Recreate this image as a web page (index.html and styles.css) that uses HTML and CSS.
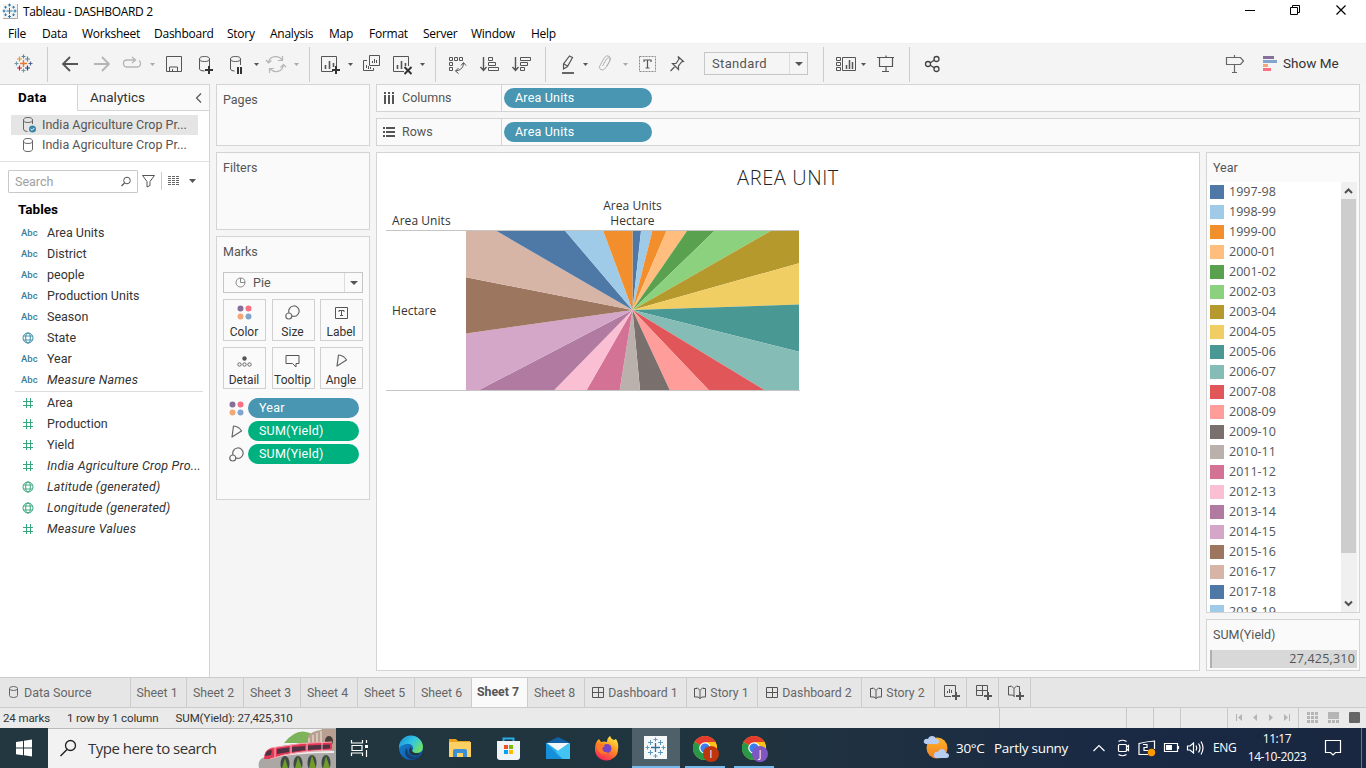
FILE: index.html
```html
<!DOCTYPE html>
<html lang="en">
<head>
<meta charset="utf-8">
<title>Tableau - DASHBOARD 2</title>
<link rel="stylesheet" href="styles.css">
</head>
<body>
<svg class="defs" width="0" height="0" aria-hidden="true">
  <defs>
    <symbol id="globe" viewBox="0 0 12 12"><g fill="none" stroke="currentColor"><circle cx="6" cy="6" r="5"/><ellipse cx="6" cy="6" rx="2.3" ry="5"/><path d="M1.5 4h9M1.5 8h9" stroke-width=".9"/></g></symbol>
    <symbol id="hash" viewBox="0 0 12 12"><path d="M4.500 1v10M8.500 1v10M1 4.500h10M1 8.500h10" fill="none" stroke="currentColor"/></symbol>
    <symbol id="dots" viewBox="0 0 15 15"><circle cx="3.500" cy="3.500" r="3" fill="#86709b"/><circle cx="11.500" cy="3.500" r="3" fill="#fa7080"/><circle cx="3.500" cy="11.500" r="3" fill="#f3a878"/><circle cx="11.500" cy="11.500" r="3" fill="#82a5cf"/></symbol>
    <symbol id="size" viewBox="0 0 15 15"><g fill="none" stroke="#666" stroke-width="1.200"><path d="M4 7.800A5.200 5.200 0 1 1 7 11"/><circle cx="3.800" cy="11" r="3"/></g></symbol>
    <symbol id="angle" viewBox="0 0 15 15"><path d="M4.500 2Q10 2.500 12.500 7L3 13z" fill="none" stroke="#666" stroke-width="1.200" stroke-linejoin="round"/></symbol>
    <symbol id="grid" viewBox="0 0 12 12"><path d="M.5.5h11v10h-11zM6.500 .5v10M.5 5.500h11" fill="none" stroke="#555"/></symbol>
    <symbol id="book" viewBox="0 0 12 12"><path d="M3 1.500H.5v8.500H4l2 1.500L8 10h3.500V1.500H9M3 .5l3 3 3-3M6 3.500v8" fill="none" stroke="#555"/></symbol>
    <symbol id="chrome" viewBox="0 0 24 24"><circle cx="12" cy="12" r="12" fill="#fbc116"/><path d="M12 12L1.600 6A12 12 0 0 1 22.400 6z" fill="#e33b2e"/><path d="M12 12L1.600 6A12 12 0 0 0 12 24l5-9z" fill="#279847"/><path d="M12 12l10.400-6A12 12 0 0 1 12 24l5-9z" fill="#fbc116"/><path d="M12 6h10.400L17 12z" fill="#fbc116"/><circle cx="12" cy="12" r="5.800" fill="#fff"/><circle cx="12" cy="12" r="4.600" fill="#3b7ded"/></symbol>
    <linearGradient id="edgeA" x1="0" y1="0" x2="1" y2=".6"><stop offset="0" stop-color="#168bd0"/><stop offset=".55" stop-color="#32c5e6"/><stop offset="1" stop-color="#6ce06a"/></linearGradient>
    <linearGradient id="edgeB" x1="0" y1="0" x2="1" y2="1"><stop offset="0" stop-color="#1687d8"/><stop offset="1" stop-color="#0c4e9b"/></linearGradient>
    <linearGradient id="fox" x1=".8" y1="0" x2=".3" y2="1"><stop offset="0" stop-color="#fff04a"/><stop offset=".45" stop-color="#ff9420"/><stop offset="1" stop-color="#f8235b"/></linearGradient>
    <linearGradient id="sun" x1="0" y1="0" x2="0" y2="1"><stop offset="0" stop-color="#fbb42b"/><stop offset="1" stop-color="#f47f22"/></linearGradient>
  </defs>
</svg>

<header class="titlebar">
  <svg width="23" height="24" viewBox="0 0 23 24"><path d="M3 4h14v14H3z" fill="#f2f2f2"/><path d="M3 18.500h14.500V4" fill="none" stroke="#aaa"/><path d="M9.500 8v6M6.500 11h6M9.500 3.500v3M8 5h3M9.500 15v3M8 16.500h3M4 9.500v3M2.500 11h3M15 9.500v3M13.500 11h3M5.500 6v2.500M4.300 7.200h2.500M13.500 6v2.500M12.300 7.200h2.500M5.500 13.500v2.500M4.300 14.800h2.500M13.500 13.500v2.500M12.300 14.800h2.500" stroke="#2b7bab" fill="none"/></svg>
  <span class="app-title">Tableau - DASHBOARD 2</span>
  <svg class="push" width="140" height="24" viewBox="1226 0 140 24"><g fill="none" stroke="#000"><path d="M1245 10.500h10M1290.500 7.500h7v7h-7zM1292.500 7v-1.500h7v7h-1.500"/><path d="M1336.500 5.500l9 9M1345.500 5.500l-9 9" stroke-width="1.200"/></g></svg>
</header>

<nav class="menubar"><span>File</span><span>Data</span><span>Worksheet</span><span>Dashboard</span><span>Story</span><span>Analysis</span><span>Map</span><span>Format</span><span>Server</span><span>Window</span><span>Help</span></nav>

<div class="toolbar">
  <svg width="48" height="41" viewBox="0 43 48 41"><g fill="none" stroke-width="1.200"><path d="M23.500 60v7M20 63.500h7" stroke="#e8762c" stroke-width="1.500"/><path d="M19.500 56.500v5M17 59h5" stroke="#eb912c"/><path d="M27.500 56.500v5M25 59h5" stroke="#59879b"/><path d="M19.500 65.500v5M17 68h5" stroke="#c72035"/><path d="M27.500 65.500v5M25 68h5" stroke="#1f447e"/><path d="M23.500 54.500v4M21.500 56.500h4" stroke="#5b879b"/><path d="M23.500 68.500v4M21.500 70.500h4" stroke="#7199a6"/><path d="M16.500 61.500v4M14.500 63.500h4" stroke="#7199a6"/><path d="M30.500 61.500v4M28.500 63.500h4" stroke="#5b6591"/></g><path d="M47.500 47v35" stroke="#ccc"/></svg>
  <svg width="38" height="41" viewBox="48 43 38 41"><path d="M78 64H63M70 57l-7 7 7 7" fill="none" stroke="#555" stroke-width="1.800"/></svg>
  <svg width="32" height="41" viewBox="86 43 32 41"><path d="M94 64h15M102 57l7 7-7 7" fill="none" stroke="#b5b5b5" stroke-width="1.800"/></svg>
  <svg width="42" height="41" viewBox="118 43 42 41"><path d="M135 60h-8q-3.500 0-3.500 3.500t3.500 3.500h10q3.500 0 3.500-3.500 0-2-1.500-3M132 57l3.500 3-3.500 3" fill="none" stroke="#b5b5b5" stroke-width="1.300"/><path d="M150 63h5l-2.500 3z" fill="#aaa"/></svg>
  <svg width="30" height="41" viewBox="160 43 30 41"><path d="M166.500 56.500h15v15h-15zM169.500 71v-4h8v4M172.500 71v-2" fill="none" stroke="#555"/></svg>
  <svg width="32" height="41" viewBox="190 43 32 41"><path d="M199.500 59v10q0 2 5 2M199.500 59a5 2.500 0 0 1 10 0 5 2.500 0 0 1-10 0M209.500 59v7" fill="none" stroke="#555"/><path d="M209 66v8M205 70h8" stroke="#333" stroke-width="2"/></svg>
  <svg width="41" height="41" viewBox="222 43 41 41"><path d="M230.500 59v10q0 2 4 2M230.500 59a5 2.500 0 0 1 10 0 5 2.500 0 0 1-10 0M240.500 59v6" fill="none" stroke="#555"/><path d="M238 67v7M241 67v7" stroke="#333" stroke-width="2"/><path d="M254 63h5l-2.500 3z" fill="#555"/></svg>
  <svg width="49" height="41" viewBox="263 43 49 41"><path d="M268.500 62a7.500 7.500 0 0 1 13.500-2M283.500 65a7.500 7.500 0 0 1-13.500 3.500M282.500 56v4.500h-4.500M269.500 73v-4.500h4.500M266 60l2.500 3 3-2.500M280.500 67.500l3-3 2.500 2.500" fill="none" stroke="#b5b5b5" stroke-width="1.200"/><path d="M294 63h5l-2.500 3z" fill="#aaa"/><path d="M309.500 47v35" stroke="#ccc"/></svg>
  <svg width="46" height="41" viewBox="312 43 46 41"><path d="M333 71.500h-11.500v-15h15V66" fill="none" stroke="#555"/><path d="M325.500 65v4M329.500 61v8M333.500 63v4" stroke="#555" stroke-width="1.600"/><path d="M336 66v8M332 70h8" stroke="#333" stroke-width="2"/><path d="M348 63h5l-2.500 3z" fill="#555"/></svg>
  <svg width="30" height="41" viewBox="358 43 30 41"><path d="M369.500 55.500h10v10h-10zM367 60.500h-3.500v10h10V68M372.500 63v-2M374.500 63v-4M376.500 63v-3M366.500 68v-3M368.500 69v-3M370.500 69v-2" fill="none" stroke="#555"/></svg>
  <svg width="52" height="41" viewBox="388 43 52 41"><path d="M404 71.500h-10.500v-15h15V66" fill="none" stroke="#555"/><path d="M397.500 65v4M401.500 61v8M405.500 63v3" stroke="#555" stroke-width="1.600"/><path d="M404.500 67l7 7M411.500 67l-7 7" stroke="#333" stroke-width="2"/><path d="M420 63h5l-2.500 3z" fill="#555"/><path d="M435.500 47v35" stroke="#ccc"/></svg>
  <svg width="34" height="41" viewBox="440 43 34 41"><path d="M449.500 57.500h3v3h-3zM454.500 57.500h3v3h-3zM459.500 57.500h3v3h-3zM449.500 62.500h3v3h-3zM449.500 67.500h3v3h-3zM463.500 63q0 7-8 8M461 65.500l2.500-3 2.500 3M458.500 68l-3 3 3 2.500" fill="none" stroke="#555"/></svg>
  <svg width="34" height="41" viewBox="474 43 34 41"><path d="M483.500 57v13M480.500 67l3 3.500 3-3.500" stroke="#555" stroke-width="1.400" fill="none"/><path d="M488.500 57.500h4v3h-4zM488.500 62.500h7v3h-7zM488.500 67.500h10v3h-10z" fill="none" stroke="#555"/></svg>
  <svg width="44" height="41" viewBox="508 43 44 41"><path d="M515.500 57v13M512.500 67l3 3.500 3-3.500" stroke="#555" stroke-width="1.400" fill="none"/><path d="M520.500 57.500h10v3h-10zM520.500 62.500h7v3h-7zM520.500 67.500h4v3h-4z" fill="none" stroke="#555"/><path d="M545.500 47v35" stroke="#ccc"/></svg>
  <svg width="42" height="41" viewBox="552 43 42 41"><path d="M569.500 56l3 1.500-5 9-4 2.500v-5zM564 64l3.500 2" fill="none" stroke="#555" stroke-width="1.200"/><path d="M562 73h12" stroke="#666" stroke-width="2"/><path d="M583 63h5l-2.500 3z" fill="#555"/></svg>
  <svg width="40" height="41" viewBox="594 43 40 41"><path d="M602.500 66l4-7q2-2.500 3.500-.5.800 1.500-4 9-3 4-5.500 2-2.500-2 0-5l4-7q2-3 5-1 2 2 0 5l-3 5" fill="none" stroke="#b0b0b0"/><path d="M623 63h5l-2.500 3z" fill="#aaa"/></svg>
  <svg width="30" height="41" viewBox="634 43 30 41"><path d="M639.500 56.500h16v15h-16z" fill="none" stroke="#888" stroke-dasharray="2 1"/><path d="M644 62v-2h7v2M647.500 60v8M645.500 68h4" fill="none" stroke="#555" stroke-width="1.200"/></svg>
  <svg width="40" height="41" viewBox="664 43 40 41"><path d="M678 56.500l5.500 5-2 .5-3 4v3.500l-6-6h3.500l3-4.500zM674.500 67l-4 4" fill="none" stroke="#555" stroke-width="1.200"/></svg>
  <div class="fit-select"><span>Standard</span><i class="caret"></i></div>
  <svg width="66" height="41" viewBox="808 43 66 41"><path d="M823.500 47v35" stroke="#ccc"/><path d="M836.500 57.500h4v3h-4zM836.500 62.500h4v3h-4zM836.500 67.500h4v3h-4zM842.500 57.500h13v13h-13z" fill="none" stroke="#555"/><path d="M846.500 65v4M849.500 60v9M852.500 62v7" stroke="#555" stroke-width="1.500"/><path d="M861 63h5l-2.500 3z" fill="#555"/></svg>
  <svg width="40" height="41" viewBox="874 43 40 41"><path d="M877 57.500h17M879.500 58v8.500h13V58M886 67v4M882 71.500h7M886 55.500v2" fill="none" stroke="#555" stroke-width="1.200"/><path d="M909.500 47v35" stroke="#ccc"/></svg>
  <svg width="34" height="41" viewBox="914 43 34 41"><g fill="none" stroke="#444" stroke-width="1.300"><circle cx="928" cy="64" r="2.500"/><circle cx="936.500" cy="59" r="2.500"/><circle cx="936.500" cy="69" r="2.500"/><path d="M930 63l4.500-3M930 65l4.500 3"/></g></svg>
  <svg class="push" width="62" height="41" viewBox="1220 43 62 41"><path d="M1234.500 55v2M1226.500 57.500h14l3 3.500-3 3.500h-14zM1234.500 65v7M1232 72.500h5" fill="none" stroke="#666" stroke-width="1.200"/><path d="M1263 56h11v3h-11z" fill="#86709b"/><path d="M1263 60h14v3h-14z" fill="#82a5cf"/><path d="M1263 64h5v3h-5z" fill="#f3a878"/><path d="M1263 68h8v3h-8z" fill="#fa7080"/></svg>
  <span class="show-me">Show Me</span>
</div>

<main class="workspace">
  <aside class="data-pane">
    <div class="pane-tabs"><b class="tab-data">Data</b><span class="tab-analytics">Analytics<svg width="8" height="12" viewBox="0 0 8 12"><path d="M6 1.500L1.500 6 6 10.500" fill="none" stroke="#555" stroke-width="1.200"/></svg></span></div>
    <div class="sources">
      <div class="source selected"><svg width="14" height="18" viewBox="0 0 14 18"><path d="M1.500 4v9q0 2.500 4 2.500M1.500 4a4.500 2.500 0 0 1 9 0 4.500 2.500 0 0 1-9 0M10.500 4v4" fill="none" stroke="#666"/><circle cx="10.500" cy="13" r="3.500" fill="#3a86a6"/><path d="M8.700 13l1.400 1.300 2.200-2.400" fill="none" stroke="#fff"/></svg><span>India Agriculture Crop Pr...</span></div>
      <div class="source"><svg width="14" height="18" viewBox="0 0 14 18"><path d="M1.500 5v8q0 2.500 4.500 2.500t4.500-2.500V5M1.500 5a4.500 2.500 0 0 1 9 0 4.500 2.500 0 0 1-9 0" fill="none" stroke="#666"/></svg><span>India Agriculture Crop Pr...</span></div>
    </div>
    <div class="search-row">
      <div class="search"><span>Search</span><svg width="12" height="12" viewBox="0 0 12 12"><circle cx="7" cy="4.500" r="3.300" fill="none" stroke="#555"/><path d="M4.500 7L1.500 10" stroke="#555" stroke-width="1.200"/></svg></div>
      <svg width="64" height="22" viewBox="138 170 64 22"><path d="M142.500 175.500h12l-4.500 6v4l-3 1.500v-5.500z" fill="none" stroke="#555"/><path d="M161.500 172v18" stroke="#ccc"/><path d="M168 176.500h12M168 178.500h12M168 180.500h12M168 182.500h12M168 184.500h12" stroke="#666" stroke-dasharray="3 1"/><path d="M189 179h7l-3.500 4z" fill="#555"/></svg>
    </div>
    <h2>Tables</h2>
    <ul class="fields dims">
      <li><i>Abc</i>Area Units</li><li><i>Abc</i>District</li><li><i>Abc</i>people</li><li><i>Abc</i>Production Units</li><li><i>Abc</i>Season</li>
      <li><svg class="ico"><use href="#globe"/></svg>State</li><li><i>Abc</i>Year</li><li><i>Abc</i><em>Measure Names</em></li>
    </ul>
    <ul class="fields meas">
      <li><svg class="ico"><use href="#hash"/></svg>Area</li><li><svg class="ico"><use href="#hash"/></svg>Production</li><li><svg class="ico"><use href="#hash"/></svg>Yield</li>
      <li><svg class="ico"><use href="#hash"/></svg><em>India Agriculture Crop Pro...</em></li>
      <li><svg class="ico"><use href="#globe"/></svg><em>Latitude (generated)</em></li><li><svg class="ico"><use href="#globe"/></svg><em>Longitude (generated)</em></li>
      <li><svg class="ico"><use href="#hash"/></svg><em>Measure Values</em></li>
    </ul>
  </aside>

  <section class="cards">
    <div class="card pages"><h3>Pages</h3></div>
    <div class="card filters"><h3>Filters</h3></div>
    <div class="card marks">
      <h3>Marks</h3>
      <div class="mark-type"><svg width="11" height="11" viewBox="0 0 11 11"><path d="M5.500 1a4.500 4.500 0 1 0 4.500 4.500M5.500 5.500V1q4.500 0 4.500 4.500z" fill="none" stroke="#888"/></svg><span>Pie</span><i class="caret"></i></div>
      <div class="mark-grid">
        <div><svg width="15" height="15"><use href="#dots"/></svg>Color</div>
        <div><svg width="15" height="15"><use href="#size"/></svg>Size</div>
        <div><svg width="15" height="15" viewBox="0 0 15 15"><path d="M1.500 2.500h12v11h-12z" fill="none" stroke="#555"/><path d="M5 7V5.500h5V7M7.500 5.500v5M6 10.500h3" fill="none" stroke="#555"/></svg>Label</div>
        <div><svg width="15" height="15" viewBox="0 0 15 15"><circle cx="7.500" cy="5.500" r="2.200" fill="#555"/><g fill="none" stroke="#666"><circle cx="2.500" cy="11.500" r="1.700"/><circle cx="7.500" cy="11.500" r="1.700"/><circle cx="12.500" cy="11.500" r="1.700"/></g></svg>Detail</div>
        <div><svg width="15" height="15" viewBox="0 0 15 15"><path d="M1 2.500h13v8h-3v3.500l-3.500-3.500H1z" fill="none" stroke="#555"/></svg>Tooltip</div>
        <div><svg width="15" height="15"><use href="#angle"/></svg>Angle</div>
      </div>
      <div class="mark-row"><svg width="15" height="15"><use href="#dots"/></svg><span class="pill blue">Year</span></div>
      <div class="mark-row"><svg width="15" height="15"><use href="#angle"/></svg><span class="pill green">SUM(Yield)</span></div>
      <div class="mark-row"><svg width="15" height="15"><use href="#size"/></svg><span class="pill green">SUM(Yield)</span></div>
    </div>
  </section>

  <section class="canvas">
    <div class="shelf"><div class="shelf-name"><svg width="12" height="13" viewBox="0 0 12 13"><path d="M2 0v2M6 0v2M10 0v2M2 3v9M6 3v9M10 3v9" stroke="#555" stroke-width="2"/></svg>Columns</div><span class="pill blue">Area Units</span></div>
    <div class="shelf"><div class="shelf-name"><svg width="12" height="13" viewBox="0 0 12 13"><path d="M0 2h2M0 6h2M0 10h2M3 2h9M3 6h9M3 10h9" stroke="#555" stroke-width="2"/></svg>Rows</div><span class="pill blue">Area Units</span></div>
    <div class="view-row">
      <div class="view">
        <h1>AREA UNIT</h1>
        <div class="crosstab">
          <div class="row-field">Area Units</div>
          <div class="col-head">Area Units<br>Hectare</div>
          <div class="row-head">Hectare</div>
          <svg class="pie" width="333" height="159" viewBox="466 231 333 159">
            <path fill="#4e79a7" d="M632.500 310V231H641z"/><path fill="#a0cbe8" d="M632.500 310L641 231H652.300z"/><path fill="#f28e2b" d="M632.500 310L652.300 231H666.500z"/><path fill="#ffbe7d" d="M632.500 310L666.500 231H687z"/><path fill="#59a14f" d="M632.500 310L687 231H714.300z"/><path fill="#8cd17d" d="M632.500 310L714.300 231H770.700z"/><path fill="#b6992d" d="M632.500 310L770.700 231H799V263.300z"/><path fill="#f1ce63" d="M632.500 310L799 263.300V304.500z"/><path fill="#499894" d="M632.500 310L799 304.500V351.700z"/><path fill="#86bcb6" d="M632.500 310L799 351.700V390H764.300z"/><path fill="#e15759" d="M632.500 310L764.300 390H708.700z"/><path fill="#ff9d9a" d="M632.500 310L708.700 390H669.700z"/><path fill="#79706e" d="M632.500 310L669.700 390H640z"/><path fill="#bab0ac" d="M632.500 310L640 390H619.700z"/><path fill="#d37295" d="M632.500 310L619.700 390H586.700z"/><path fill="#fabfd2" d="M632.500 310L586.700 390H554.300z"/><path fill="#b07aa1" d="M632.500 310L554.300 390H479z"/><path fill="#d4a6c8" d="M632.500 310L479 390H466V333.500z"/><path fill="#9d7660" d="M632.500 310L466 333.500V277.300z"/><path fill="#d7b5a6" d="M632.500 310L466 277.300V231H496.500z"/><path fill="#4e79a7" d="M632.500 310L496.500 231H565.300z"/><path fill="#a0cbe8" d="M632.500 310L565.300 231H603.300z"/><path fill="#f28e2b" d="M632.500 310L603.300 231H632.500z"/>
          </svg>
        </div>
      </div>
      <div class="legends">
        <div class="card year-legend">
          <h3>Year</h3>
          <div class="legend-body">
            <ul>
              <li><i class="c1"></i>1997-98</li><li><i class="c2"></i>1998-99</li><li><i class="c3"></i>1999-00</li><li><i class="c4"></i>2000-01</li><li><i class="c5"></i>2001-02</li><li><i class="c6"></i>2002-03</li><li><i class="c7"></i>2003-04</li><li><i class="c8"></i>2004-05</li><li><i class="c9"></i>2005-06</li><li><i class="c10"></i>2006-07</li><li><i class="c11"></i>2007-08</li><li><i class="c12"></i>2008-09</li><li><i class="c13"></i>2009-10</li><li><i class="c14"></i>2010-11</li><li><i class="c15"></i>2011-12</li><li><i class="c16"></i>2012-13</li><li><i class="c17"></i>2013-14</li><li><i class="c18"></i>2014-15</li><li><i class="c19"></i>2015-16</li><li><i class="c20"></i>2016-17</li><li><i class="c1"></i>2017-18</li><li><i class="c2"></i>2018-19</li>
            </ul>
            <div class="scroll"><svg width="15" height="17" viewBox="0 0 15 17"><path d="M4 11l3.500-3.500L11 11" fill="none" stroke="#505050" stroke-width="2"/></svg><div class="thumb"></div><svg width="15" height="17" viewBox="0 0 15 17"><path d="M4 6.500l3.500 3.500L11 6.500" fill="none" stroke="#505050" stroke-width="2"/></svg></div>
          </div>
        </div>
        <div class="card sum-card"><h3>SUM(Yield)</h3><div class="sum-bar">27,425,310</div></div>
      </div>
    </div>
  </section>
</main>

<nav class="sheet-tabs">
  <span class="source-tab"><svg width="9" height="12" viewBox="0 0 9 12"><path d="M.5 2.500v7q0 2 4 2t4-2v-7M.5 2.500a4 2 0 0 1 8 0 4 2 0 0 1-8 0" fill="none" stroke="#666"/></svg>Data Source</span>
  <span>Sheet 1</span><span>Sheet 2</span><span>Sheet 3</span><span>Sheet 4</span><span>Sheet 5</span><span>Sheet 6</span><span class="active">Sheet 7</span><span>Sheet 8</span>
  <span><svg width="12" height="12"><use href="#grid"/></svg>Dashboard 1</span><span><svg width="12" height="12"><use href="#book"/></svg>Story 1</span><span><svg width="12" height="12"><use href="#grid"/></svg>Dashboard 2</span><span><svg width="12" height="12"><use href="#book"/></svg>Story 2</span>
  <span><svg width="16" height="16" viewBox="0 0 16 16"><path d="M7 11.500H.5v-11h11V7M3.500 8V6M5.500 8V4M7.500 8V5" fill="none" stroke="#555"/><path d="M12 7v8M8 11h8" stroke="#555" stroke-width="2"/></svg></span>
  <span><svg width="16" height="16" viewBox="0 0 16 16"><path d="M7 10.500H.5V.5h11V7M6.500 .5v10M.5 5.500h11" fill="none" stroke="#555"/><path d="M12 7v8M8 11h8" stroke="#555" stroke-width="2"/></svg></span>
  <span><svg width="16" height="16" viewBox="0 0 16 16"><path d="M7 11.500L4 10H.5V1.500H3M3 .5l3 3 3-3M6 3.500v8M9 1.500h2.500V7" fill="none" stroke="#555"/><path d="M12 7v8M8 11h8" stroke="#555" stroke-width="2"/></svg></span>
</nav>

<div class="status"><span>24 marks</span><span>1 row by 1 column</span><span>SUM(Yield): 27,425,310</span>
  <svg class="push" width="368" height="20" viewBox="998 708 368 20"><path d="M999.500 708v20M1126.500 708v20M1153.500 708v20M1180.500 708v20M1227.500 708v20M1298.500 708v20" stroke="#c9c9c9"/><g fill="#b5b5b5"><path d="M1236 714h1v7h-1zM1242 714v7l-4-3.500zM1257 714v7l-4-3.500zM1269 714v7l4-3.500zM1284 714v7l4-3.500zM1289 714h1v7h-1z"/><path d="M1307 712h3v3h-3zM1311 712h3v3h-3zM1315 712h3v3h-3zM1307 716h3v3h-3zM1311 716h3v3h-3zM1315 716h3v3h-3zM1307 720h3v3h-3zM1311 720h3v3h-3zM1315 720h3v3h-3zM1328 712h11v7h-11zM1328 720h3v3h-3zM1332 720h3v3h-3zM1336 720h3v3h-3z"/></g><rect x="1349" y="712" width="11" height="11" rx="1" fill="#666"/></svg>
</div>

<footer class="taskbar">
  <svg width="48" height="40" viewBox="0 728 48 40"><path d="M16 742l7-1v6.500h-7zM24 740.800l8-1.300v8h-8zM16 748.500h7v6.700l-7-1zM24 748.500h8v8l-8-1.200z" fill="#fff"/></svg>
  <div class="win-search">
    <svg width="40" height="40" viewBox="48 728 40 40"><circle cx="70.500" cy="745.500" r="5" fill="none" stroke="#222" stroke-width="1.300"/><path d="M67 749.500l-6.500 6.500" stroke="#222" stroke-width="1.400"/></svg>
    <span>Type here to search</span>
    <svg class="push" width="78" height="40" viewBox="258 728 78 40">
      <path d="M284 743q14-18 30-8l4 8z" fill="#7db35b"/><path d="M308 736q4-5 13-6l2-2h13v40h-28z" fill="#b7a091"/><path d="M309 738v8M313 735v9M317 733v10M321 731v12" stroke="#d7c6b8" stroke-width="2"/><ellipse cx="329" cy="741" rx="4" ry="5" fill="#4a3e3a"/>
      <path d="M259 768q-2-9 6-11 30-7 71-7v18z" fill="#aaa7a5"/><path d="M264 758q30-6 70-6" fill="none" stroke="#efefef" stroke-width="2"/>
      <g fill="#3d4946"><ellipse cx="285" cy="764" rx="4.500" ry="8"/><ellipse cx="298" cy="764" rx="4.500" ry="8"/><ellipse cx="312" cy="763" rx="4.500" ry="8"/><ellipse cx="326" cy="763" rx="4.500" ry="8"/></g><g fill="#719b2d"><path d="M285 758l3 10h-6zM298 757l4 11h-7zM312 755l4 13h-7zM326 756l4 12h-7z"/></g>
      <path d="M264 759q0-9 7-11 28-6 61-6v8q-38 0-62 9z" fill="#e23755"/><path d="M266 753q1-3 6-3l-1 5-6 1zM277 749l12-1.500v4.500l-12 2zM292 747l13-1v4l-13 2zM308 745.500l22-1v4l-22 1.500z" fill="#4e3143"/><path d="M271 748q30-6 61-6M270 759q24-8 62-9" stroke="#f5a5b0" fill="none"/><path d="M275 748v9M291 745v9M307 743v8M322 742v8" stroke="#f8bec6"/>
    </svg>
  </div>
  <svg width="50" height="40" viewBox="336 728 50 40"><path d="M351.500 740v3h11v-3M351.500 756v-3h11v3M352 745.500h10v5h-10zM366.500 740v3M366.500 750v7" fill="none" stroke="#fff" stroke-width="1.200"/><path d="M365 745h3v3h-3z" fill="#fff"/></svg>
  <svg width="50" height="40" viewBox="386 728 50 40"><circle cx="411" cy="748" r="12" fill="url(#edgeB)"/><path d="M399 748a12 12 0 0 1 24-1q0 6-7 6-4 0-4-2 2-2 1-4-2-4-7-3-5 1-7 4z" fill="url(#edgeA)"/><path d="M407 748q0 8 8 9 4 0 6-2l-2 3q-7 4-12-1-4-5 0-9z" fill="#16406f"/><path d="M412 751q2 3 8 2l-1 2q-9 2-10-4 0-3 2-4z" fill="#22363f"/></svg>
  <svg width="48" height="40" viewBox="436 728 48 40"><path d="M449 739h7l2 2h12v4h-21z" fill="#e8a21c"/><path d="M449 742h22v15h-22z" fill="#fcd062"/><path d="M453 757v-6q0-2 2-2h10q2 0 2 2v6h-4v-4h-6v4z" fill="#3b8fd6"/></svg>
  <svg width="50" height="40" viewBox="484 728 50 40"><path d="M503.500 742v-3.500h10v3.500" fill="none" stroke="#2aaee9" stroke-width="2"/><path d="M497 741h23v16q0 3-3 3h-17q-3 0-3-3z" fill="#f1f4f7"/><path d="M504 745h4v4h-4z" fill="#f25022"/><path d="M509 745h4v4h-4z" fill="#7fba00"/><path d="M504 750h4v4h-4z" fill="#00a4ef"/><path d="M509 750h4v4h-4z" fill="#ffb900"/></svg>
  <svg width="48" height="40" viewBox="534 728 48 40"><path d="M546 743l12-6 12 6z" fill="#1260a5"/><path d="M546 743h24v16h-24z" fill="#2aaee9"/><path d="M547 743h22l-11 8z" fill="#f3f7fa"/><path d="M570 743v16h-7l-7-7z" fill="#42c5f4"/><path d="M546 743l16 16h-16z" fill="#168fd9"/></svg>
  <svg width="50" height="40" viewBox="582 728 50 40"><path d="M595 749q0-7 4-10l2 3q3-1 6 0 0-4 3-6 1 3 4 4l2-1q3 4 2 11a11.500 11 0 0 1-23-1z" fill="url(#fox)"/><circle cx="607" cy="748.500" r="4.500" fill="#7744c8"/><path d="M597 743q4 0 8 3l-3 2q0 5 6 4-4 4-9 0-3-4-2-9z" fill="#ff7a24"/></svg>
  <svg width="48" height="40" viewBox="632 728 48 40"><path d="M632 728h48v40h-48z" fill="#4e616b"/><path d="M632 766h48v2h-48z" fill="#76b9ed"/><path d="M644 736h23v23h-23z" fill="#f6f7f8"/><path d="M655.500 743v9M651 747.500h9" stroke="#2f6f9f" stroke-width="1.300"/><path d="M655.500 737.500v4M653.500 739.500h4M655.500 754v4M653.500 756h4M647.500 745.500v4M645.500 747.500h4M663.500 745.500v4M661.500 747.500h4M650.500 740v5M648 742.500h5M660.500 740v5M658 742.500h5M650.500 750v5M648 752.500h5M660.500 750v5M658 752.500h5" stroke="#5c9bbf"/></svg>
  <div class="chrome-app first"><svg width="24" height="24"><use href="#chrome"/></svg><b>I</b></div>
  <div class="chrome-app second"><svg width="24" height="24"><use href="#chrome"/></svg><b>J</b></div>
  <svg class="push" width="36" height="40" viewBox="920 728 36 40"><circle cx="937" cy="748" r="10.500" fill="url(#sun)"/><g fill="#b8cdf2"><path d="M926 744q-3-1-2-3.500t4-1.500q1-3 4-3t4 3q3 0 3 2.500t-3 2.500zM936 758q-3-1-2-4t4-2q1-3 4-3t4 4q3 0 3 2.500t-3 2.500z"/></g></svg>
  <span class="weather">30°C</span><span class="sky">Partly sunny</span>
  <svg width="130" height="40" viewBox="1082 728 130 40"><g fill="none" stroke="#fff" stroke-width="1.200"><path d="M1093.500 751l5.500-5.500 5.500 5.500M1119.500 744.500h6q1 0 1 1v5q0 1-1 1h-6q-1 0-1-1v-5q0-1 1-1zM1126.500 747l2-1.500v5l-2-1.500M1118.500 741.500q4-2.500 8 0M1118.500 754.500q4 2.500 8 0M1148 754.500h-9v-11q8-2 15.500-2.500v8M1143 744.500h4v3h-3v3h4M1164.500 743.500h13v8h-13zM1178.500 746v3M1187.500 746h2.500l3.500-3v10l-3.500-3h-2.500zM1196 745.500q1.500 2.500 0 5M1198.500 743.500q3 4.500 0 9M1201 741.500q4 6.500 0 13"/></g><path d="M1166 745h6v5h-6z" fill="#fff"/><circle cx="1151.500" cy="752.500" r="3.700" fill="#f90"/></svg>
  <span class="lang">ENG</span>
  <div class="clock">11:17<br>14-10-2023</div>
  <svg width="54" height="40" viewBox="1312 728 54 40"><path d="M1325.500 740.500h15v12h-5l-2.500 2.500-2.500-2.500h-5z" fill="none" stroke="#fff" stroke-width="1.200"/><path d="M1361.500 728v40" stroke="#6b7787"/></svg>
</footer>
</body>
</html>
```

FILE: styles.css
```css
* { box-sizing: border-box; }
body {
  margin: 0;
  width: 1366px;
  height: 768px;
  overflow: hidden;
  display: flex;
  flex-direction: column;
  background: #f5f5f5;
  font: 12.5px/16px Roboto, sans-serif;
  color: #555;
}
svg { display: block; flex: none; }
.defs { position: absolute; }
ul { list-style: none; margin: 0; padding: 0; }
h1, h2, h3 { margin: 0; font-weight: 400; }
span { white-space: nowrap; }
.push { margin-left: auto; }

.titlebar, .menubar { background: #fff; color: #000; font: 12px/16px "Open Sans", sans-serif; flex: none; }
.titlebar { height: 24px; display: flex; }
.app-title { padding-top: 4px; letter-spacing: -.35px; }
.menubar {
  height: 19px;
  padding: 2px 0 0 8px;
  display: grid;
  grid-template-columns: 34px 40px 72px 73px 43px 59px 40px 54px 48px 60px 40px;
  letter-spacing: -.25px;
}

.toolbar { height: 41px; flex: none; display: flex; background: #f4f4f4; border-top: 1px solid #f0f0f0; }
.toolbar > svg { margin-top: -1px; }
.caret { width: 18px; display: flex; align-items: center; justify-content: center; border-left: 1px solid #dcdcdc; margin-left: auto; }
.caret::before { content: ""; border: 4px solid transparent; border-top-color: #555; border-bottom: 0; }
.fit-select {
  width: 104px; height: 23px; margin-top: 8px; display: flex; flex: none;
  border: 1px solid #c6c6c6; background: #f5f5f5;
  padding-left: 7px; line-height: 22px; font-size: 13px; letter-spacing: .35px;
}
.show-me { width: 84px; padding-left: 1px; line-height: 39px; font-size: 13.5px; color: #333; }

.workspace { height: 593px; flex: none; display: flex; }
.data-pane { width: 210px; background: #fff; border-right: 1px solid #d4d4d4; border-top: 1px solid #d4d4d4; flex: none; }
.pane-tabs { display: flex; height: 26px; line-height: 25px; font-size: 13.5px; color: #333; }
.tab-data { width: 77px; padding-left: 18px; color: #000; font-weight: 700; letter-spacing: .2px; }
.tab-analytics {
  flex: 1; display: flex; justify-content: space-between; align-items: center;
  padding: 0 6px 0 12px; background: #fafafa; border: solid #d4d4d4; border-width: 0 0 1px 1px;
}
.sources { height: 51px; padding: 4px 11px 0; border-bottom: 1px solid #e0e0e0; }
.source { height: 20px; display: flex; gap: 6px; padding-left: 11px; line-height: 20px; align-items: center; }
.source.selected { background: #e5e5e5; }
.search-row { display: flex; padding: 8px 0 0 8px; height: 39px; }
.search {
  width: 130px; height: 23px; border: 1px solid #c9c9c9; border-radius: 1px;
  display: flex; align-items: center; justify-content: space-between; padding: 0 5px 0 6px; color: #a0a0a0;
}
.data-pane h2 { padding-left: 18px; font: 700 13.5px/16px Roboto, sans-serif; color: #000; height: 21px; }
.fields li { height: 21px; display: flex; align-items: center; color: #333; font-size: 12.5px; }
.fields li i { width: 26px; margin-left: 21px; font: 500 9.5px/16px Roboto, sans-serif; color: #397f9c; padding-top: 1px; }
.ico { width: 12px; height: 12px; margin: 0 13px 0 22px; color: #3a8ca6; }
.meas .ico { color: #36a67c; }
.meas { border-top: 1px solid #dcdcdc; margin: 1px 6px 0 15px; }
.meas .ico { margin-left: 7px; }
.meas li { white-space: nowrap; }
.fields em { letter-spacing: .2px; }

.cards { width: 160px; padding-left: 6px; display: flex; flex-direction: column; gap: 6px; flex: none; }
.card { background: #fafafa; border: 1px solid #d4d4d4; }
.card h3 { font-size: 12.5px; line-height: 16px; padding: 7px 0 0 6px; }
.pages { height: 62px; }
.filters { height: 78px; }
.marks { height: 264px; }
.mark-type {
  height: 21px; margin: 12px 6px 0; border: 1px solid #c6c6c6; display: flex; align-items: center; padding-left: 11px; gap: 7px;
}
.mark-type .caret { align-self: stretch; }
.mark-grid { display: grid; grid-template-columns: 43px 43px 43px; grid-auto-rows: 42px; column-gap: 5.500px; row-gap: 6px; margin: 6px 6px 9px; }
.mark-grid > div { border: 1px solid #d0d0d0; display: flex; flex-direction: column; align-items: center; justify-content: space-between; padding: 5px 1px 0 0; font-size: 12px; color: #333; }
.mark-row { display: flex; align-items: center; height: 20px; margin: 0 10px 3px 12px; gap: 4px; }
.pill { display: block; flex: 1; height: 20px; border-radius: 10px; padding-left: 11px; color: #fff; line-height: 19px; letter-spacing: .2px; }
.blue { background: #4996b2; }
.green { background: #00b180; }

.canvas { width: 984px; margin-left: 6px; display: flex; flex-direction: column; gap: 6px; }
.shelf { height: 28px; border: 1px solid #d4d4d4; background: #fafafa; display: flex; align-items: center; }
.shelf-name { width: 125px; height: 26px; display: flex; align-items: center; gap: 7px; padding-left: 6px; border-right: 1px solid #d4d4d4; margin-right: 2px; }
.shelf .pill { flex: none; width: 148px; }
.view-row { display: flex; gap: 6px; }
.view { width: 824px; height: 519px; background: #fff; border: 1px solid #d4d4d4; padding: 12px 9px; }
.view h1 { font: 300 20px/26px "Open Sans", sans-serif; text-align: center; color: #222; letter-spacing: .6px; }
.crosstab {
  display: grid; grid-template-columns: 80px 333px; grid-template-rows: 40px 159px;
  width: 414px; border-bottom: 1px solid #c4c4c4; font: 500 12px/15px "Open Sans", sans-serif; color: #333; letter-spacing: .05px;
}
.row-field, .col-head { border-bottom: 1px solid #c4c4c4; display: flex; align-items: flex-end; padding-bottom: 2px; }
.row-field, .row-head { padding-left: 6px; }
.col-head { justify-content: center; text-align: center; }
.row-head { display: flex; align-items: center; }

.legends { display: flex; flex-direction: column; gap: 6px; width: 154px; }
.year-legend { height: 461px; }
.card.year-legend h3 { height: 29px; }
.legend-body { height: 430px; display: flex; background: #fff; overflow: hidden; margin-right: 2px; }
.legend-body ul { flex: 1; }
.legend-body li { height: 20px; display: flex; align-items: center; gap: 5px; padding-left: 3px; font: 12.5px/20px "Open Sans", sans-serif; }
.legend-body li i { width: 14px; height: 14px; }
.scroll { width: 16px; background: #f0f0f0; display: flex; flex-direction: column; }
.scroll .thumb { height: 354px; background: #cdcdcd; margin-right: 1px; }
.scroll svg:last-child { margin-top: auto; }
.sum-card { height: 52px; }
.sum-bar { height: 18px; margin: 7px 2px 0 3px; background: #d8d8d8; border-left: 2px solid #b0b0b0; text-align: right; padding-right: 2px; font: 12.5px/18px "Open Sans", sans-serif; letter-spacing: .2px; }
.c1 { background: #4e79a7; } .c2 { background: #a0cbe8; } .c3 { background: #f28e2b; } .c4 { background: #ffbe7d; }
.c5 { background: #59a14f; } .c6 { background: #8cd17d; } .c7 { background: #b6992d; } .c8 { background: #f1ce63; }
.c9 { background: #499894; } .c10 { background: #86bcb6; } .c11 { background: #e15759; } .c12 { background: #ff9d9a; }
.c13 { background: #79706e; } .c14 { background: #bab0ac; } .c15 { background: #d37295; } .c16 { background: #fabfd2; }
.c17 { background: #b07aa1; } .c18 { background: #d4a6c8; } .c19 { background: #9d7660; } .c20 { background: #d7b5a6; }

.sheet-tabs {
  height: 31px; flex: none; display: grid; background: #e6e6e6; border: solid #cbcbcb; border-width: 1px 0;
  grid-template-columns: 131px 56px 57px 57px 57px 57px 57px 56px 57px 102px 71px 104px 73px 32px 32px 32px;
  color: #666;
}
.sheet-tabs span { border-right: 1px solid #cbcbcb; display: flex; align-items: center; justify-content: center; gap: 4px; font-size: 12.3px; padding-right: 3px; }
.sheet-tabs span:nth-child(n+10) { padding-right: 1px; }
.sheet-tabs span:nth-child(n+14) { padding: 1px 0 0 2px; }
.sheet-tabs .source-tab { justify-content: flex-start; padding-left: 9px; gap: 6px; font-size: 12.5px; }
.sheet-tabs .source-tab svg { margin-top: -2px; }
.sheet-tabs .active { background: #fafafa; font-weight: 700; color: #555; padding-bottom: 2px; }
.status { height: 20px; flex: none; display: flex; background: #eaeaea; font-size: 11.500px; line-height: 20px; color: #333; gap: 17px; padding-left: 3px; letter-spacing: -.1px; }

.taskbar { height: 40px; flex: none; display: flex; background: linear-gradient(90deg, #22373f, #20343f 55%, #1a2944 82%, #192740); color: #fff; font: 12px/18px "Open Sans", sans-serif; }
.win-search { width: 288px; height: 40px; display: flex; background: #f2f2f2; border-top: 1px solid #bbb; color: #333; font-size: 15px; line-height: 38px; flex: none; overflow: hidden; }
.win-search svg { margin-top: -1px; }
.win-search span { letter-spacing: -.5px; }
.chrome-app { position: relative; width: 40px; padding: 8px 0 0 8px; border-bottom: 2px solid #76b9ed; }
.first { margin-left: 5px; }
.second { margin-left: 9px; }
.chrome-app b { position: absolute; left: 18px; top: 18px; width: 16px; height: 16px; border-radius: 8px; background: #bf360c; font: 400 10px/16px "Open Sans", sans-serif; text-align: center; }
.second b { background: #7e57c2; }
.weather, .sky { line-height: 40px; font-size: 13.5px; letter-spacing: -.3px; }
.weather { width: 38px; }
.sky { width: 88px; }
.lang { line-height: 39px; width: 34px; letter-spacing: -.3px; padding-left: 1px; }
.clock { width: 66px; padding-top: 2px; text-align: center; letter-spacing: -.4px; padding-right: 4px; }
```
